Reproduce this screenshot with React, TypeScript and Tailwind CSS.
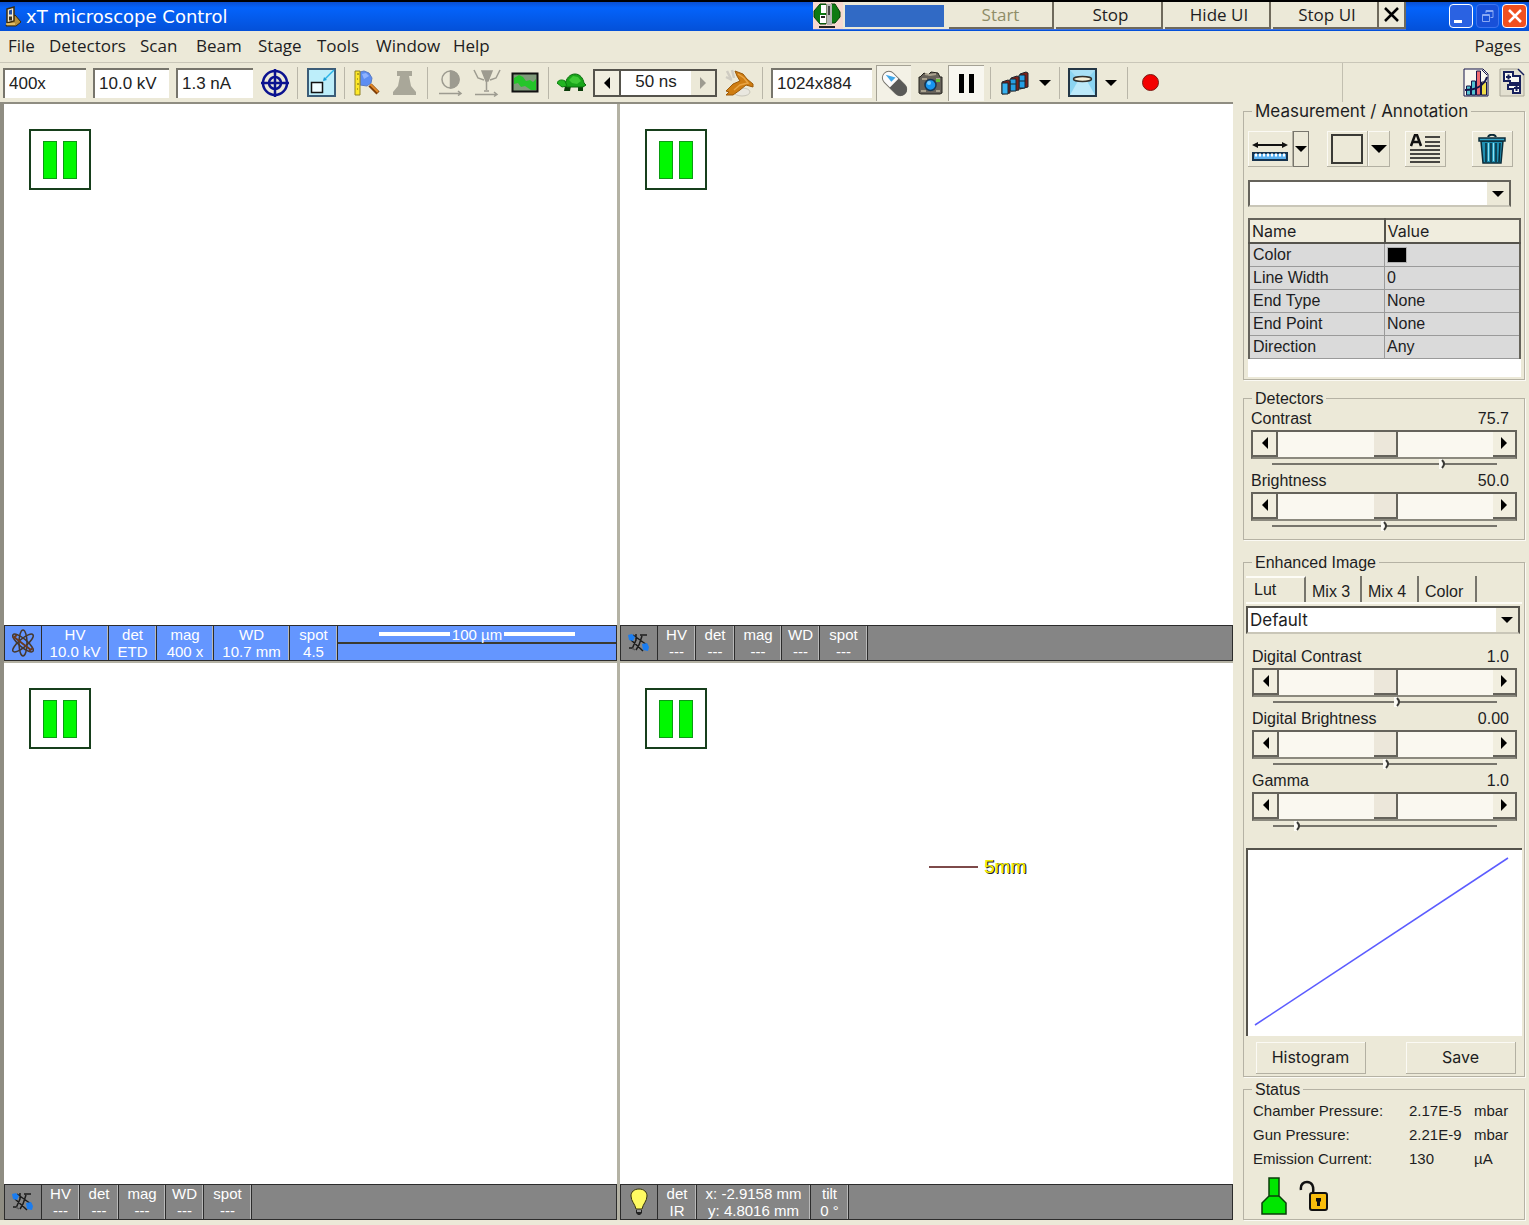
import { useId, useState, type ReactNode } from "react";

const titleButton =
  "h-[27px] shrink-0 border-b-2 border-r-2 border-[#6f6a5c] bg-[#ece9d8] text-center font-['Open_Sans',sans-serif] text-[17px] leading-[22px]";

function Sep({ className = "" }: { className?: string }) {
  return <span className={`h-8 w-px shrink-0 bg-[#b9b6a8] ${className}`} />;
}

function Tool({ label, className = "", children }: { label: string; className?: string; children: ReactNode }) {
  return (
    <button type="button" aria-label={label} className={`flex h-9 shrink-0 items-center justify-center ${className}`}>
      {children}
    </button>
  );
}

function Caret({ dir = "down", className = "fill-black" }: { dir?: "down" | "left" | "right"; className?: string }) {
  const d = { down: "M0 3h12L6 9z", left: "M9 0v12L3 6z", right: "M3 0v12l6-6z" }[dir];
  return (
    <svg width="12" height="12" viewBox="0 0 12 12" className={className}>
      <path d={d} />
    </svg>
  );
}

function Field({ label, value, className }: { label: string; value: string; className: string }) {
  return (
    <input
      aria-label={label}
      defaultValue={value}
      className={`h-[30px] shrink-0 border-l-2 border-t-2 border-[#77756c] bg-white pl-1 text-[17px] text-[#222] outline-none ${className}`}
    />
  );
}

function AppIcon() {
  return (
    <svg width="18" height="21" viewBox="0 0 18 21">
      <path d="M3 17l8-8 6 7-5 4H2z" fill="#b8913a" stroke="#3a2a08" strokeWidth="1" />
      <path d="M3 3l7-2v14l-7 2z" fill="#f4ead0" stroke="#3d2d0c" strokeWidth="1.500" />
      <path d="M5 4.500l3-1v5H5z" fill="#2450a0" />
      <path d="M5 10.500h3v4H5z" fill="#3b3420" />
      <path d="M2 18h9" stroke="#f0cd72" strokeWidth="1.500" />
    </svg>
  );
}

function ServerIcon() {
  return (
    <svg width="30" height="27" viewBox="0 0 30 27">
      <path fill="#f6d9d0" d="M0 0h30v27H0z" />
      <path d="M7 2h6v20H7L1 15V9zM18 2h4l5 8v5l-5 6h-4z" fill="#0d7a12" stroke="#063f08" />
      <path d="M8 3h5v8H8z" fill="#fff" />
      <path d="M14 2h5v21h-5z" fill="#b5b5b5" />
      <path d="M7 13h6v8H7z" fill="#fff" />
      <path d="M8 15h4" stroke="#222" strokeWidth="2" />
      <path d="M15 4h2v9h-2z" fill="#444" />
      <path d="M6 24h16v2H6z" fill="#222" />
    </svg>
  );
}

function TitleBar() {
  return (
    <header className="flex h-[31px] items-start border-t-2 border-t-black bg-gradient-to-b from-[#0a4fd0] via-[#0463fb] via-20% to-[#0450d8] pl-1">
      <div className="flex h-[29px] items-center gap-1 text-white">
        <AppIcon />
        <h1 className="whitespace-nowrap font-['DejaVu_Sans',sans-serif] text-[18px] leading-6">xT microscope Control</h1>
      </div>
      <div className="ml-auto flex h-[28px] shrink-0 border-b border-[#3f6fe0] bg-[#ece9d8]">
        <ServerIcon />
        <div className="ml-0.5 mt-[3px] h-[22px] w-[99px] bg-[#316ac5]" />
        <button type="button" disabled className={`${titleButton} ml-[5px] w-[105px] text-[#8f8d68]`}>Start</button>
        <button type="button" className={`${titleButton} ml-0.5 w-[107px] pl-1`}>Stop</button>
        <button type="button" className={`${titleButton} ml-0.5 w-[106px] pl-1`}>Hide UI</button>
        <button type="button" className={`${titleButton} ml-0.5 w-[106px] pl-1`}>Stop UI</button>
        <button type="button" aria-label="Close toolbar" className={`${titleButton} flex w-[27px] items-center justify-center`}>
          <svg width="16" height="16" viewBox="0 0 16 16" stroke="#000" strokeWidth="2.500"><path d="M1 1l13 13M14 1L1 14" /></svg>
        </button>
      </div>
      <div className="ml-[43px] mr-0.5 flex h-[28px] shrink-0 items-center gap-[3px]">
        <button type="button" aria-label="Minimize" className="flex h-6 w-6 items-end rounded border border-white bg-[#2a62e2] pb-1 pl-1">
          <span className="h-[3px] w-2 bg-white" />
        </button>
        <button type="button" aria-label="Restore" className="flex h-6 w-[23px] items-center justify-center rounded border border-[#3c74ee] bg-[#1850d8]">
          <svg width="14" height="14" viewBox="0 0 14 14" fill="none" stroke="#88a8f4"><path d="M5 4V1.500h7v7H9.500M5 2.500h7M1.500 5.500h7v7h-7zM1.500 6.500h7" /></svg>
        </button>
        <button type="button" aria-label="Close" className="flex h-6 w-[25px] items-center justify-center rounded border border-white bg-[#f0501f]">
          <svg width="16" height="16" viewBox="0 0 16 16" stroke="#fff" strokeWidth="2.500"><path d="M2 2l12 12M14 2L2 14" /></svg>
        </button>
      </div>
    </header>
  );
}

const menus = [
  ["File", "w-[41px]"],
  ["Detectors", "w-[91px]"],
  ["Scan", "w-14"],
  ["Beam", "w-[62px]"],
  ["Stage", "w-[59px]"],
  ["Tools", "w-[59px]"],
  ["Window", "w-[77px]"],
  ["Help", "w-12"],
];

function MenuBar() {
  return (
    <nav className="flex h-8 items-center border-b border-[#c9c6b8] pb-0.5 pl-2 pr-2 font-['Open_Sans',sans-serif] text-[17px]">
      {menus.map(([m, w]) => (
        <button key={m} type="button" className={`shrink-0 text-left ${w}`}>{m}</button>
      ))}
      <button type="button" className="ml-auto">Pages</button>
    </nav>
  );
}

function Toolbar() {
  return (
    <div className="flex h-[39px] items-center pl-[3px]">
      <Field label="Magnification" value="400x" className="w-[83px]" />
      <Field label="High voltage" value="10.0 kV" className="ml-[7px] w-[76px]" />
      <Field label="Beam current" value="1.3 nA" className="ml-[7px] w-[77px]" />
      <Tool label="Centre beam" className="ml-2 w-7">
        <svg width="28" height="28" viewBox="0 0 28 28" fill="none" stroke="#0b1290">
          <circle cx="14" cy="14" r="12" strokeWidth="2.500" />
          <circle cx="14" cy="14" r="6" strokeWidth="2.500" />
          <path d="M14 0v28M0 14h28" strokeWidth="2.500" />
        </svg>
      </Tool>
      <Sep className="ml-2" />
      <Tool label="Reduced area" className="ml-[9px] w-[29px]">
        <svg width="29" height="29" viewBox="0 0 29 29">
          <path d="M1 1h27v27H1z" fill="#bdeefa" stroke="#3c5d78" strokeWidth="2" />
          <path d="M4.500 14.500h11v10h-11z" fill="#eefcff" stroke="#111" strokeWidth="1.500" />
          <path d="M27 2L17 12" stroke="#2ab3e6" strokeWidth="1.500" />
          <path d="M16 13l1-4 3 3z" fill="#1a9fd8" />
        </svg>
      </Tool>
      <Sep className="ml-2" />
      <Tool label="Find feature" className="ml-[9px] w-[26px]">
        <svg width="26" height="26" viewBox="0 0 26 26">
          <path d="M16 15l8 8" stroke="#7d3c05" strokeWidth="4.500" />
          <path d="M16 14l8 8" stroke="#e28a2a" strokeWidth="2" />
          <path d="M6 2l4-1 5 2 3 5-1 5-4 3-7-1z" fill="#5c8df2" stroke="#5a7bc4" />
          <path d="M8 4l4-1 3 3-5 3z" fill="#8fb3ff" />
          <path d="M1 1h5v24H1z" fill="#ffe928" stroke="#8f8122" />
          <path d="M3 4h2M3 9h1M3 14h2M3 19h1" stroke="#6d6216" />
        </svg>
      </Tool>
      <Tool label="Vent" className="ml-[11px] w-[27px]">
        <svg width="27" height="28" viewBox="0 0 27 28" fill="#a9a799">
          <path d="M6 2h15v5h-3l2 10 5 6v3H2v-3l5-6L9 7H6z" />
        </svg>
      </Tool>
      <Sep className="ml-[9px]" />
      <Tool label="Auto contrast" className="ml-[11px] w-6">
        <svg width="24" height="26" viewBox="0 0 24 26" fill="none" stroke="#9d9b90" strokeWidth="1.500">
          <circle cx="11.500" cy="9.500" r="8.500" />
          <path d="M11.500 1a8.500 8.500 0 010 17z" fill="#9d9b90" />
          <path d="M0 23.500h22M19 21l3 2.500-3 2" />
        </svg>
      </Tool>
      <Tool label="Auto focus" className="ml-2.5 w-7">
        <svg width="28" height="30" viewBox="0 0 28 30" fill="none" stroke="#9d9b90" strokeWidth="1.500">
          <path d="M1 2l4 8 6 2M27 2l-4 8-6 2M13.500 13v9M11 23h5" />
          <path d="M9 3h10l-4 10h-2z" fill="#9d9b90" />
          <path d="M2 26.500h22M21 24l3 2.500-3 2" />
        </svg>
      </Tool>
      <Tool label="Videoscope" className="ml-2.5 w-7">
        <svg width="28" height="21" viewBox="0 0 28 21">
          <path d="M1.500 1.500h25v18h-25z" fill="#7f9a7a" stroke="#111" strokeWidth="2" />
          <path d="M3 6l5-3 4 2 3 4 4-1 3 2 3-3v11h-5l-6-4-4 1-3-4-4 1z" fill="#24c52a" />
        </svg>
      </Tool>
      <Sep className="ml-[9px]" />
      <Tool label="Slow scan" className="ml-2 w-[29px]">
        <svg width="29" height="20" viewBox="0 0 29 20">
          <path d="M8 13h6l-1 5H7zM21 13h5v5h-5z" fill="#0b3d0a" />
          <path d="M8 12C9 5 13 1 18 1s8 4 9 9l2 2-3 2H10z" fill="#19a51a" stroke="#0a6d0d" />
          <path d="M0 10c1-3 5-4 8-2l2 5-5 1z" fill="#22b522" stroke="#0a7d0d" />
          <path d="M12 7l4-4 5 1 3 4-4 3-5-1z" fill="#3fc936" />
        </svg>
      </Tool>
      <div className="ml-[7px] flex h-7 w-[124px] shrink-0 border-2 border-[#55534c] bg-white">
        <button type="button" aria-label="Shorter dwell" className="flex w-[26px] items-center justify-center border-r-2 border-[#55534c] bg-[#f1eee0]"><Caret dir="left" /></button>
        <output className="flex-1 text-center text-[17px] leading-[22px]">50 ns</output>
        <button type="button" aria-label="Longer dwell" className="flex w-6 items-center justify-center bg-[#ece9d8]"><Caret dir="right" className="fill-[#9d9b90]" /></button>
      </div>
      <Tool label="Fast scan" className="ml-[7px] w-[30px]">
        <svg width="30" height="28" viewBox="0 0 30 28">
          <path d="M3 2l4 8M8 1l2 8M2 8l6 3" stroke="#cfccc2" strokeWidth="2.500" />
          <ellipse cx="18" cy="23" rx="8" ry="4" fill="#e9e7df" stroke="#c8c5ba" />
          <path d="M11 2l8 3 4 5 6 5 0 3-7-2-6 5-7 5-7 0 3-3-3-1 7-7 7-3-3-5z" fill="#cf7d12" stroke="#9c5a08" />
          <path d="M14 5l6 4 4 5-8 2-6 5" fill="none" stroke="#e9a545" strokeWidth="1.500" />
        </svg>
      </Tool>
      <Sep className="ml-2" />
      <Field label="Resolution" value="1024x884" className="ml-2 w-[101px]" />
      <Tool label="Beam blank" className="ml-1 w-[35px] border-l border-t border-[#a5a295] bg-[#f3f1e6]">
        <svg width="27" height="27" viewBox="0 0 27 27">
          <g transform="rotate(45 13.500 13.500)">
            <rect x="-1" y="7" width="29" height="13" rx="6.500" fill="#fbfbfb" stroke="#77756d" />
            <path d="M13 7h9a6.500 6.500 0 010 13h-9z" fill="#5a5a58" />
            <path d="M1 13.500l9-5v6z" fill="#3fa7e8" />
          </g>
        </svg>
      </Tool>
      <Tool label="Photo" className="ml-0.5 w-[35px]">
        <svg width="26" height="24" viewBox="0 0 26 24">
          <path d="M2 6l4-4 4 2 3-3 7 1 2 4h2v16l-2 1H3l-2-1V6z" fill="#67625a" stroke="#25221c" />
          <path d="M7 3l5 1 6-1M4 8h5M18 8h4M3 20h5M18 20h4" stroke="#aaa28e" strokeWidth="2" />
          <path d="M18 8h4v3h-4z" fill="#63bf39" />
          <circle cx="12.500" cy="14" r="5.500" fill="#1695ef" stroke="#163552" strokeWidth="1.500" />
          <circle cx="11" cy="12" r="2" fill="#79cbff" />
        </svg>
      </Tool>
      <Tool label="Pause" className="w-9 gap-[5px] border-l border-t border-[#a5a295] bg-[#f8f7f0]">
        <span className="h-[19px] w-[5px] bg-black" />
        <span className="h-[19px] w-[5px] bg-black" />
      </Tool>
      <Sep className="ml-1.5" />
      <Tool label="Average" className="ml-2.5 w-7">
        <svg width="28" height="24" viewBox="0 0 28 24" stroke="#1c242c">
          <path d="M19 3l6-2 2 1v14l-8 2z" fill="#7d201a" />
          <path d="M18 4h6v13h-6z" fill="#269fe4" />
          <path d="M10 7l6-2 2 1v13l-8 1z" fill="#7d201a" />
          <path d="M9 8h6v12H9z" fill="#269fe4" />
          <path d="M1 11l6-2 2 1v12l-8 1z" fill="#7d201a" />
          <path d="M1 12h6v11H1zM9 13h6M18 10h6" fill="#38b2f0" />
        </svg>
      </Tool>
      <Tool label="Average options" className="ml-1.5 w-5"><Caret /></Tool>
      <Sep className="ml-1" />
      <Tool label="Sample view" className="ml-2 w-[29px]">
        <svg width="29" height="29" viewBox="0 0 29 29">
          <path d="M1 1h27v27H1z" fill="#8ad4f2" stroke="#243746" strokeWidth="2" />
          <path d="M10 13L2 27h25L19 13z" fill="#bce9fa" />
          <path d="M2 2h25l-7 8H9z" fill="#a8e0f6" />
          <ellipse cx="14.500" cy="11" rx="9" ry="2.500" fill="#f5efd8" stroke="#33302b" strokeWidth="1.500" />
        </svg>
      </Tool>
      <Tool label="Sample view options" className="ml-1 w-5"><Caret /></Tool>
      <Sep className="ml-1.5" />
      <Tool label="Record" className="ml-3 w-5"><span className="h-[17px] w-[17px] rounded-full border border-[#7a1c14] bg-[#f40000]" /></Tool>
      <div className="ml-auto flex h-full w-[187px] items-center justify-end gap-2.5 border-l border-[#c2bfb0] pr-1">
        <Tool label="Imaging page" className="w-[26px]">
          <svg width="26" height="29" viewBox="0 0 26 29" stroke="#15154a">
            <path d="M1 1h19l5 5v22H1z" fill="#f9f7ef" />
            <path d="M3.500 18h4v9h-4zM8.500 13h4v14h-4z" fill="#54c3d1" />
            <path d="M13.500 3h4v24h-4z" fill="#ef6a70" />
            <path d="M18.500 14h5v13h-5z" fill="#f0dc48" />
            <path d="M2 22c10 0 19-4 22-13" fill="none" strokeWidth="2" />
            <path d="M19 2l5 5" />
          </svg>
        </Tool>
        <Tool label="Alignment page" className="w-[26px]">
          <svg width="26" height="29" viewBox="0 0 26 29" fill="#f9f8f2" stroke="#17205c" strokeWidth="2">
            <path d="M1 1h18l6 6v21H1z" fill="#e3e0d0" stroke="#aaa799" strokeWidth="1" />
            <path d="M19 1l6 6" strokeWidth="1.500" />
            <path d="M5 4h9v4h7v7H11v-2H5z" />
            <path d="M9 17h12v8h-7v-4H9z" />
            <path d="M7 9h5M9.500 6.500v5M15 20h5M17.500 18v5" />
          </svg>
        </Tool>
      </div>
    </div>
  );
}

type Cell = { top: string; bottom: string; w: string };

function AtomIcon() {
  return (
    <svg width="24" height="28" viewBox="0 0 24 28" fill="none" stroke="#46382e" strokeWidth="1.500">
      <ellipse cx="12" cy="14" rx="4" ry="13" />
      <ellipse cx="12" cy="14" rx="4" ry="13" transform="rotate(50 12 14)" />
      <ellipse cx="12" cy="14" rx="4" ry="13" transform="rotate(-50 12 14)" />
      <path d="M3 8l17 13M2 9l4-3M18 22l4-3" stroke="#6b3a1e" strokeWidth="2" />
    </svg>
  );
}

function BeamIcon() {
  return (
    <svg width="24" height="22" viewBox="0 0 24 22" fill="none" stroke="#1c1c1c" strokeWidth="1.500">
      <path d="M6 3l14 10M4 8l12 11M9 2v6l-4 9M9 18l3-5 3-9M2 16h4M13 3h7" />
      <path d="M5 16l3 2" stroke="#555" />
      <path d="M1 3l4-1 3 3-2 4-4-1z" fill="#1b7df0" stroke="none" />
      <path d="M15 12l5-1 2 4-1 4-5-1z" fill="#1b7df0" stroke="none" />
    </svg>
  );
}

function BulbIcon() {
  return (
    <svg width="18" height="28" viewBox="0 0 18 28">
      <path d="M9 1c5 0 8 3 8 7 0 5-4 8-5 13H6C5 16 1 13 1 8c0-4 3-7 8-7z" fill="#fffb62" stroke="#35330f" />
      <path d="M6 22h6v3l-2 2H8l-2-2z" fill="#222" />
      <path d="M7 23h4" stroke="#fff" />
    </svg>
  );
}

function DataBar({ icon, cells, active, children }: { icon: ReactNode; cells: Cell[]; active?: boolean; children?: ReactNode }) {
  return (
    <footer className={`flex h-9 border border-[#2c2c2c] text-[15px] leading-[17px] text-white ${active ? "bg-[#6496ff]" : "bg-[#858585]"}`}>
      <div className="flex w-[37px] shrink-0 items-center justify-center border-r border-[#2c2c2c]">{icon}</div>
      {cells.map((c) => (
        <div key={c.top} className={`shrink-0 whitespace-nowrap border-r border-[#2c2c2c] text-center shadow-[inset_-1px_0_0_#b9b9b9] ${c.w}`}>
          <div>{c.top}</div>
          <div>{c.bottom}</div>
        </div>
      ))}
      {children}
    </footer>
  );
}

function Viewport({ name, children, bar }: { name: string; children?: ReactNode; bar: ReactNode }) {
  return (
    <section aria-label={name} className="flex min-w-0 flex-col">
      <div className="relative flex-1 bg-white p-[25px]">
        <button type="button" aria-label={`Resume ${name}`} className="flex h-[61px] w-[62px] items-center justify-center gap-1.5 border-2 border-[#173f1c] bg-white">
          <span className="h-[38px] w-3.5 border border-[#0a9c12] bg-[#00f800]" />
          <span className="h-[38px] w-3.5 border border-[#0a9c12] bg-[#00f800]" />
        </button>
        {children}
      </div>
      {bar}
    </section>
  );
}

const idle = (ws: string[]): Cell[] =>
  ["HV", "det", "mag", "WD", "spot"].map((top, i) => ({ top, bottom: "---", w: ws[i] }));

function Viewports() {
  return (
    <main className="grid min-w-0 flex-1 grid-cols-2 grid-rows-2 gap-x-[3px] gap-y-0.5 border-l-4 border-t-2 border-[#8f8d82] bg-[#b4b2a4]">
      <Viewport
        name="quad 1"
        bar={
          <DataBar
            active
            icon={<AtomIcon />}
            cells={[
              { top: "HV", bottom: "10.0 kV", w: "w-[67px]" },
              { top: "det", bottom: "ETD", w: "w-12" },
              { top: "mag", bottom: "400 x", w: "w-[57px]" },
              { top: "WD", bottom: "10.7 mm", w: "w-[76px]" },
              { top: "spot", bottom: "4.5", w: "w-12" },
            ]}
          >
            <div className="flex-1">
              <div className="flex h-[18px] items-center justify-center gap-0.5 border-b-2 border-[#3b3a30]">
                <span className="h-1 w-[71px] bg-white" />
                <span>100 µm</span>
                <span className="h-1 w-[71px] bg-white" />
              </div>
            </div>
          </DataBar>
        }
      />
      <Viewport name="quad 2" bar={<DataBar icon={<BeamIcon />} cells={idle(["w-[38px]", "w-[39px]", "w-[47px]", "w-[38px]", "w-12"])} />} />
      <Viewport name="quad 3" bar={<DataBar icon={<BeamIcon />} cells={idle(["w-[38px]", "w-[39px]", "w-[47px]", "w-[38px]", "w-12"])} />} />
      <Viewport
        name="quad 4"
        bar={
          <DataBar
            icon={<BulbIcon />}
            cells={[
              { top: "det", bottom: "IR", w: "w-[39px]" },
              { top: "x: -2.9158 mm", bottom: "y: 4.8016 mm", w: "w-[114px]" },
              { top: "tilt", bottom: "0 °", w: "w-[38px]" },
            ]}
          />
        }
      >
        <div className="absolute left-[309px] top-[192px] flex h-6 items-center gap-1.5">
          <span className="h-0.5 w-[49px] bg-[#7d4a4a]" />
          <span className="text-[19px] text-[#f4f000] [text-shadow:1px_1px_0_#222,1px_0_0_#222]">5mm</span>
        </div>
      </Viewport>
    </main>
  );
}

function Group({ title, className = "", legend = "", body = "", children }: { title: string; className?: string; legend?: string; body?: string; children: ReactNode }) {
  return (
    <fieldset className={`min-w-0 border border-[#b5b2a4] shadow-[1px_1px_0_#fbfaf4] ${className}`}>
      <legend className={`ml-2 h-[18px] px-[3px] leading-[18px] ${legend || "text-[16px]"}`}>{title}</legend>
      <div className={body}>{children}</div>
    </fieldset>
  );
}

function Knob({ label, value, at }: { label: string; value: string; at: number }) {
  const id = useId();
  return (
    <div className="text-[16px]">
      <div className="flex h-[22px] items-center justify-between pr-2">
        <label htmlFor={id}>{label}</label>
        <output htmlFor={id}>{value}</output>
      </div>
      <div className="flex h-[29px] border-2 border-[#65635b] border-b-[#8b897e] bg-[#faf8f0]">
        <button type="button" aria-label={`Decrease ${label}`} className="flex w-[25px] items-center justify-center border-b-2 border-r-2 border-[#65635b] bg-[#f1eedf]"><Caret dir="left" /></button>
        <input
          id={id}
          type="range"
          defaultValue={50}
          className="h-full min-w-0 flex-1 appearance-none bg-transparent [&::-webkit-slider-thumb]:h-[25px] [&::-webkit-slider-thumb]:w-6 [&::-webkit-slider-thumb]:appearance-none [&::-webkit-slider-thumb]:rounded-none [&::-webkit-slider-thumb]:border-b-2 [&::-webkit-slider-thumb]:border-l-0 [&::-webkit-slider-thumb]:border-r-2 [&::-webkit-slider-thumb]:border-t-0 [&::-webkit-slider-thumb]:border-solid [&::-webkit-slider-thumb]:border-[#65635b] [&::-webkit-slider-thumb]:bg-[#ece7da]"
        />
        <button type="button" aria-label={`Increase ${label}`} className="flex w-[22px] items-center justify-center border-b-2 border-[#65635b] bg-[#f1eedf]"><Caret dir="right" /></button>
      </div>
      <div className="flex h-[11px] items-center pl-[21px] pr-5">
        <div className="relative h-0.5 flex-1 bg-[#77756c]">
          <svg width="8" height="10" viewBox="0 0 8 10" className="absolute -top-1 -translate-x-1" style={{ left: `${at}%` }}>
            <path d="M0 0h4v10H0z" fill="#fdfcf6" />
            <path d="M3 1q4 4 0 8" fill="none" stroke="#3a3a36" strokeWidth="2" />
          </svg>
        </div>
      </div>
    </div>
  );
}

const bevel = "border-b border-r border-[#b3b0a2] shadow-[inset_1px_1px_0_#fbfaf4]";

function Measurement() {
  return (
    <Group title="Measurement / Annotation" legend="font-['Inter',sans-serif] text-[17px]" body="pl-1 pr-[3px] pb-0.5">
      <div className="mt-2.5 flex h-[38px] items-center pr-2">
        <Tool label="Measure" className={`w-[45px] ${bevel}`}>
          <svg width="36" height="28" viewBox="0 0 36 28">
            <path d="M3 10h30" stroke="#111" strokeWidth="2" />
            <path d="M6 7v6l-6-3zM30 7v6l6-3z" fill="#111" />
            <path d="M1 18h34v7H1z" fill="#5cb0ee" stroke="#17324c" strokeWidth="2" />
            <path d="M3 20h30" stroke="#fff" strokeWidth="3" strokeDasharray="2 2" />
          </svg>
        </Tool>
        <Tool label="Measure options" className="w-4 border border-[#77756c]"><Caret className="w-4 shrink-0 fill-black" /></Tool>
        <Tool label="Rectangle" className={`ml-[18px] w-[41px] ${bevel}`}><span className="h-[30px] w-8 border-2 border-[#3a3a36]" /></Tool>
        <Tool label="Shape options" className={`w-[22px] ${bevel}`}><svg width="16" height="10" viewBox="0 0 16 10"><path d="M0 1h16L8 9z" /></svg></Tool>
        <Tool label="Text" className={`ml-[15px] w-[41px] ${bevel}`}>
          <svg width="31" height="29" viewBox="0 0 31 29" fill="none" stroke="#111">
            <path d="M1 12L5 1h2l4 11M3 8h6" strokeWidth="2.500" />
            <path d="M15 3h15M15 8h15M15 12h15M0 16h30M0 20h30M0 24h30M0 28h30" strokeWidth="1.500" />
          </svg>
        </Tool>
        <Tool label="Delete" className={`ml-auto w-[41px] ${bevel}`}>
          <svg width="28" height="30" viewBox="0 0 28 30">
            <path d="M3 7h22l-2 22H5z" fill="#1f8fb2" stroke="#0b2c3a" strokeWidth="1.500" />
            <path d="M1 4h26v3H1z" fill="#35a5c8" stroke="#0b2c3a" strokeWidth="1.500" />
            <path d="M10 3c1-3 7-3 8 0" fill="none" stroke="#0b2c3a" strokeWidth="2" />
            <path d="M8 9v19M13 9v19M18 9v19M22 9l-1 19" stroke="#0b2c3a" strokeWidth="1.500" />
            <path d="M10.500 9v18M15.500 9v18" stroke="#8fe0f0" />
          </svg>
        </Tool>
      </div>
      <div className="relative mt-3 mr-2.5 h-[27px]">
        <select aria-label="Annotation" className="h-full w-full appearance-none border-2 border-[#65635b] border-b-[#c9c6b8] bg-white">
          <option></option>
        </select>
        <span className="pointer-events-none absolute bottom-0.5 right-0.5 top-0.5 flex w-[22px] items-center justify-center bg-[#ece9d8]"><Caret /></span>
      </div>
      <div className="mt-[11px] bg-white pb-[18px]">
        <table className="w-full table-fixed border-2 border-b-0 border-[#65635b] text-left text-[16px]">
          <thead className="bg-[#f0edde] font-['Inter',sans-serif]">
            <tr className="h-6 border-b-2 border-[#55534c]">
              <th className="border-r-2 border-[#55534c] py-0 pl-0.5 font-normal leading-5">Name</th>
              <th className="py-0 pl-0.5 font-normal leading-5">Value</th>
            </tr>
          </thead>
          <tbody className="bg-[#dadada]">
            {[["Color", ""], ["Line Width", "0"], ["End Type", "None"], ["End Point", "None"], ["Direction", "Any"]].map(([n, v]) => (
              <tr key={n} className="h-[23px] border-b border-[#9a9a9a]">
                <td className="border-r border-[#9a9a9a] py-0 pl-[3px] leading-5">{n}</td>
                <td className="py-0 pl-0.5 leading-5">{v || <span className="block h-4 w-5 border border-[#b0b0b0] bg-black" />}</td>
              </tr>
            ))}
          </tbody>
        </table>
      </div>
    </Group>
  );
}

function EnhancedImage() {
  const [tab, setTab] = useState("Lut");
  return (
    <Group title="Enhanced Image" className="mt-3.5" body="px-0.5 pb-0.5">
      <div role="tablist" className="mt-0.5 flex h-[30px] items-end border-b-2 border-[#fdfcf6] text-[16px]">
        {[["Lut", "w-[60px]"], ["Mix 3", "w-14"], ["Mix 4", "w-[57px]"], ["Color", "w-[58px]"]].map(([t, w]) => (
          <button
            key={t}
            type="button"
            role="tab"
            aria-selected={t === tab}
            onClick={() => setTab(t)}
            className={`h-[26px] border-r-2 border-r-[#77756c] text-left ${t === tab ? "border-t-2 border-t-[#fdfcf6] pb-1 pl-2" : "pl-1.5 pt-1"} ${w}`}
          >
            {t}
          </button>
        ))}
      </div>
      <div className="relative mr-0.5 mt-0.5 h-7">
        <select aria-label="Lookup table" className="h-full w-full appearance-none border-2 border-[#55534c] border-b-[#c9c6b8] bg-white pl-0.5 font-['Inter',sans-serif] text-[17px]">
          <option>Default</option>
        </select>
        <span className="pointer-events-none absolute bottom-0.5 right-0.5 top-0.5 flex w-[22px] items-center justify-center bg-[#ece9d8]"><Caret /></span>
      </div>
      <div className="mt-3 pl-1.5 pr-[5px]">
        <Knob label="Digital Contrast" value="1.0" at={56} />
        <Knob label="Digital Brightness" value="0.00" at={51} />
        <Knob label="Gamma" value="1.0" at={11} />
      </div>
      <div className="mt-4 h-[188px] border-l-2 border-t-2 border-[#55534c] bg-white">
        <svg width="100%" height="100%" viewBox="0 0 274 186" preserveAspectRatio="none">
          <path d="M7 175L260 8" stroke="#5c5cff" strokeWidth="1.500" />
        </svg>
      </div>
      <div className="mt-1.5 flex justify-between pl-2.5 pr-1.5 font-['Inter',sans-serif] text-[16px]">
        <button type="button" className={`h-8 w-[110px] ${bevel}`}>Histogram</button>
        <button type="button" className={`h-8 w-[110px] ${bevel}`}>Save</button>
      </div>
    </Group>
  );
}

function Status() {
  return (
    <Group title="Status" className="mt-1" body="pb-0.5">
      <table className="w-full table-fixed text-left text-[15px]">
        <tbody>
          {[["Chamber Pressure:", "2.17E-5", "mbar"], ["Gun Pressure:", "2.21E-9", "mbar"], ["Emission Current:", "130", "µA"]].map(([n, v, u]) => (
            <tr key={n} className="h-6">
              <th className="w-[165px] whitespace-nowrap p-0 pl-[9px] font-normal leading-5">{n}</th>
              <td className="w-[65px] p-0 leading-5">{v}</td>
              <td className="p-0 leading-5">{u}</td>
            </tr>
          ))}
        </tbody>
      </table>
      <div className="mt-1 flex h-[42px] items-center gap-3 pl-[17px]">
        <svg width="26" height="38" viewBox="0 0 26 38" stroke="#0b3d0a" strokeWidth="1.500">
          <path d="M8 1h10v18l7 7v11H1V26l7-7z" fill="#00e600" />
          <path d="M8 19h10" />
        </svg>
        <svg width="30" height="32" viewBox="0 0 30 32" fill="none">
          <path d="M2 10C1 4 5 2 8 2c5 0 7 4 6 11" stroke="#111" strokeWidth="2.500" />
          <rect x="11" y="13" width="17" height="17" rx="2" fill="#f8bd0c" stroke="#111" strokeWidth="2" />
          <path d="M17 18h5v3l-1 1v4h-3v-4l-1-1z" fill="#111" />
        </svg>
      </div>
    </Group>
  );
}

export default function App() {
  return (
    <div className="flex min-h-screen flex-col bg-[#ece9d8] font-['Liberation_Sans',sans-serif] text-[#1d1d22]">
      <TitleBar />
      <MenuBar />
      <Toolbar />
      <div className="flex flex-1 pb-[5px]">
        <Viewports />
        <aside className="w-[296px] shrink-0 pl-2.5 pr-1">
          <Measurement />
          <Group title="Detectors" className="mt-2.5" body="px-[7px] pb-[7px]">
            <Knob label="Contrast" value="75.7" at={76} />
            <Knob label="Brightness" value="50.0" at={50} />
          </Group>
          <EnhancedImage />
          <Status />
        </aside>
      </div>
    </div>
  );
}
